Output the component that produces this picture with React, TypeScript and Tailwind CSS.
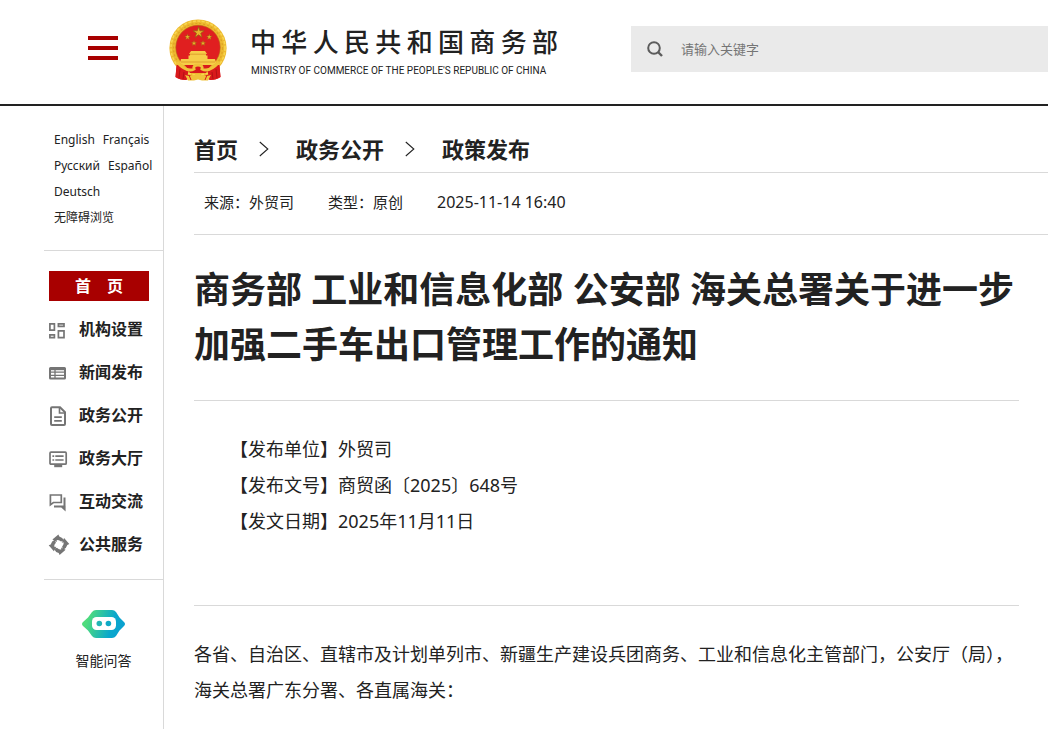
import React from 'react';

const SITE_NAME = '中华人民共和国商务部';

const languages = [
  ['English', 'Français'],
  ['Русский', 'Español'],
  ['Deutsch'],
  ['无障碍浏览'],
];

const Emblem: React.FC = () => {
  const star = '0,-1 0.225,-0.309 0.951,-0.309 0.364,0.118 0.588,0.809 0,0.382 -0.588,0.809 -0.364,0.118 -0.951,-0.309 -0.225,-0.309';

  return (
    <svg className="h-[62px] w-[58px] shrink-0" viewBox="0 0 58 62" role="img" aria-label="国徽">
      <path d="M8 43L6.500 58q4 3 10 3l3-1h19l3 1q6 0 10-3L50 43z" fill="#d9191c" />
      <circle cx="29" cy="29" r="28.6" fill="#edb92f" />
      <circle cx="29" cy="29" r="27" fill="none" stroke="#f8d650" strokeWidth="1.6" strokeDasharray="3 1.5" />
      <circle cx="29" cy="29" r="24.5" fill="none" stroke="#dda324" strokeWidth="1.2" strokeDasharray="2 2" />
      <circle cx="29" cy="28.5" r="22.2" fill="#e01f20" stroke="#b8601a" strokeWidth="0.6" />
      <g fill="#e8b52c" stroke="#8f6310" strokeWidth="0.12">
        <polygon points={star} transform="translate(29.6 13.6) scale(5.8)" />
        <polygon points={star} transform="translate(18.5 18) scale(3)" />
        <polygon points={star} transform="translate(40.3 18) scale(3)" />
        <polygon points={star} transform="translate(25 24.3) scale(2.8)" />
        <polygon points={star} transform="translate(34 24.3) scale(2.8)" />
      </g>
      <path d="M22 32h14l2 3H20zM21 35h16v1.5h1.5V40h-19v-3.5H21zM12 40h34l1 4-3 2H14l-3-2z" fill="#f6cd48" />
      <path d="M21 35.2h16M12 43h34" stroke="#d68d22" strokeWidth="0.7" />
      <path d="M7.500 46q7-1 12 6l-2 9q-7 0-11-3zM50.500 46q-7-1-12 6l2 9q7 0 11-3z" fill="#d9191c" />
      <path d="M11 50l-1 9M47 50l1 9M15 53l-1 7M43 53l1 7" stroke="#a80f12" strokeWidth="0.8" />
      <path d="M16 46h26l-5 8H21z" fill="#d9191c" />
      <path d="M8 43q10 11 17 7q-1-4 4-4t4 4q7 4 17-7" fill="none" stroke="#f0c23a" strokeWidth="3" />
      <path d="M16 56q6 2 9 0q4-2 8 0q3 2 9 0l-3 5.500h-6l-4-1-4 1h-6z" fill="#f0c23a" />
      <path d="M20 56l2 5M38 56l-2 5" stroke="#d9191c" strokeWidth="1" />
    </svg>
  );
};

const GridIcon: React.FC = () => (
  <svg className="size-5" viewBox="0 0 20 20" fill="none" stroke="#757575" strokeWidth="1.7">
    <path d="M.9 3.9h4.5v6.3H.9zM9.4 3.9H15v2.5H9.4zM.9 14.9h4.5v2.8H.9zM9.4 10.9H15v6.8H9.4z" />
  </svg>
);

const NewsIcon: React.FC = () => (
  <svg className="size-5" viewBox="0 0 20 20" fill="none" stroke="#757575">
    <rect x="1" y="4.9" width="15" height="10.6" rx="0.5" strokeWidth="2" />
    <path d="M1 6h15" strokeWidth="2.4" />
    <path d="M1 9.2h15M1 12.4h15M6 6v9" strokeWidth="1.3" />
  </svg>
);

const DocumentIcon: React.FC = () => (
  <svg className="size-5" viewBox="0 0 20 20" fill="none" stroke="#757575" strokeWidth="2">
    <path d="M2 2.2q0-1 1-1h8l5 5V18q0 1-1 1H3q-1 0-1-1z" />
    <path d="M10.5 1.5V7H16" strokeWidth="1.6" />
    <path d="M5.2 11.2h7.6M5.2 14.9h7.6" strokeWidth="1.7" />
  </svg>
);

const ScreenIcon: React.FC = () => (
  <svg className="size-5" viewBox="0 0 20 20" fill="none" stroke="#757575">
    <rect x="1" y="3.2" width="16.2" height="12" rx="1" strokeWidth="1.7" />
    <path d="M3.4 7.2h1.8M6.3 7.2h8.3M3.4 11h1.8M6.3 11h8.3" strokeWidth="1.7" />
    <path d="M5.2 17h8" strokeWidth="2.4" />
  </svg>
);

const ChatIcon: React.FC = () => (
  <svg className="size-5" viewBox="0 0 20 20" fill="none" stroke="#757575" strokeWidth="1.7">
    <path d="M1.4 3h10.9v7.5H4.4l-3 2.3z" />
    <path d="M15.5 5.4v9.1H5M15.6 13.8v3.4l-3-2.7" strokeWidth="2" />
  </svg>
);

const ServiceIcon: React.FC = () => {
  const blade = 'M3.4 4.6L9.4-.6l.9 2q3.4.8 4.700 4.200L12 6.600Q9.800 4.200 7.600 5.200L8 7z';

  return (
    <svg className="size-5 overflow-visible" viewBox="0 0 20 20" fill="#757575">
      <path d={blade} />
      <path d={blade} transform="rotate(90 10 9.7)" />
      <path d={blade} transform="rotate(180 10 9.7)" />
      <path d={blade} transform="rotate(270 10 9.7)" />
    </svg>
  );
};

const RobotIcon: React.FC = () => (
  <svg className="h-7 w-[43px]" viewBox="0 0 43 28">
    <defs>
      <linearGradient id="robot" x1="0" y1="0.4" x2="1" y2="0.6">
        <stop offset="0.1" stopColor="#4fdc7c" />
        <stop offset="0.7" stopColor="#0aa8cc" />
        <stop offset="1" stopColor="#0a9fd0" />
      </linearGradient>
    </defs>
    <path
      d="M14 0h16q2.5 0 4 2l3.5 5.5 4.5 4.5q2 2 0 4l-4.5 4.5L34 26q-1.5 2-4 2H14q-2.5 0-4-2l-4-5.5L1 16q-2-2 0-4l5-4.5L10 2q1.5-2 4-2z"
      fill="url(#robot)"
    />
    <rect x="10" y="7" width="24" height="13" rx="4.5" fill="#fff" />
    <circle cx="17.3" cy="13.5" r="2.8" fill="#21b5b5" />
    <circle cx="26.4" cy="13.5" r="2.8" fill="#0fa9c6" />
  </svg>
);

const Chevron: React.FC = () => (
  <svg className="mx-[21px] h-4 w-[10px]" viewBox="0 0 10 16" fill="none" stroke="#222" strokeWidth="1.1" aria-hidden="true">
    <path d="M.8 1l8 7-8 7" />
  </svg>
);

const menu = [
  { label: '机构设置', icon: <GridIcon /> },
  { label: '新闻发布', icon: <NewsIcon /> },
  { label: '政务公开', icon: <DocumentIcon /> },
  { label: '政务大厅', icon: <ScreenIcon /> },
  { label: '互动交流', icon: <ChatIcon /> },
  { label: '公共服务', icon: <ServiceIcon /> },
];

const Header: React.FC = () => (
  <header className="flex items-start border-b-2 border-[#222] pb-[23px] pl-[88px]">
    <button type="button" aria-label="菜单" className="mt-9 flex w-[30px] shrink-0 flex-col gap-[6px]">
      <span className="h-1 w-full bg-[#a80000]" />
      <span className="h-1 w-full bg-[#a80000]" />
      <span className="h-1 w-full bg-[#a80000]" />
    </button>
    <a href="#" className="mt-[19px] ml-[51px] flex shrink-0 gap-[23px]">
      <Emblem />
      <span className="flex w-[308px] flex-col pt-1">
        {/* one cell per character so the name spreads over the English line */}
        <span className="flex justify-between text-[26px] leading-[38px] font-medium">
          {Array.from(SITE_NAME).map((char, i) => (
            <span key={i}>{char}</span>
          ))}
        </span>
        <span className="pl-px font-[Roboto,'Liberation_Sans',sans-serif] text-[10px] leading-[19px] whitespace-nowrap">
          MINISTRY OF COMMERCE OF THE PEOPLE'S REPUBLIC OF CHINA
        </span>
      </span>
    </a>
    <form className="mt-[26px] ml-[73px] flex h-[46px] min-w-0 flex-1 items-center bg-[#eaeaea] pl-4">
      <button type="submit" aria-label="搜索">
        <svg className="size-4" viewBox="0 0 16 16" fill="none" stroke="#5c5c5c" strokeWidth="2">
          <circle cx="7" cy="7" r="5.8" />
          <path d="M11 11l4 4" strokeWidth="2.4" />
        </svg>
      </button>
      <input
        type="text"
        aria-label="请输入关键字"
        placeholder="请输入关键字"
        className="ml-[18px] h-full min-w-0 flex-1 bg-transparent text-[13px] outline-none placeholder:text-[#757575]"
      />
    </form>
  </header>
);

const Sidebar: React.FC = () => (
  <aside className="w-[164px] shrink-0 border-r border-[#d9d9d9] pl-11">
    <div className="border-b border-[#d9d9d9] pt-[21px] pb-[19px] pl-[10px] text-xs leading-[26px]">
      {languages.map((row) => (
        <div key={row[0]} className="flex gap-2 whitespace-nowrap">
          {row.map((name) => (
            <a key={name} href="#">{name}</a>
          ))}
        </div>
      ))}
    </div>
    <nav className="border-b border-[#d9d9d9] pt-5 pb-[13px] pl-[5px] text-base font-bold">
      <a href="#" className="mb-[7px] block w-[100px] bg-[#a80000] text-center leading-[30px] text-white">
        首　页
      </a>
      {menu.map((item) => (
        <a key={item.label} href="#" className="flex h-[43px] items-center gap-[10px] whitespace-nowrap">
          {item.icon}
          <span className="pb-0.5">{item.label}</span>
        </a>
      ))}
    </nav>
    <a href="#" className="flex flex-col items-center gap-3 pt-[30px] text-sm leading-[22px]">
      <RobotIcon />
      智能问答
    </a>
  </aside>
);

const Article: React.FC = () => (
  <main className="min-w-0 flex-1 pl-[30px]">
    <nav className="flex items-center border-b border-[#d9d9d9] pt-[26px] pb-[6px] text-[22px] leading-[34px] font-bold">
      <a href="#">首页</a>
      <Chevron />
      <a href="#" className="ml-[6px]">政务公开</a>
      <Chevron />
      <a href="#" className="ml-[6px]">政策发布</a>
    </nav>
    <div className="flex gap-[34px] border-b border-[#d9d9d9] pb-[2px] pl-[10px] text-[15px] leading-[59px]">
      <span>来源：外贸司</span>
      <span>类型：原创</span>
      <time className="text-base leading-[59px]">2025-11-14 16:40</time>
    </div>
    <article className="mr-[29px]">
      <h1 className="border-b border-[#d9d9d9] pt-[27px] pb-7 text-4xl leading-[55px] font-bold">
        商务部 工业和信息化部 公安部 海关总署关于进一步加强二手车出口管理工作的通知
      </h1>
      <div className="border-b border-[#d9d9d9] pt-[30px] pb-[66px] indent-9 text-lg leading-9">
        <p>【发布单位】外贸司</p>
        <p>【发布文号】商贸函〔2025〕648号</p>
        <p>【发文日期】2025年11月11日</p>
      </div>
      <p className="pt-[30px] text-lg leading-9">
        各省、自治区、直辖市及计划单列市、新疆生产建设兵团商务、工业和信息化主管部门，公安厅（局），海关总署广东分署、各直属海关：
      </p>
    </article>
  </main>
);

const App: React.FC = () => {
  return (
    <div lang="zh-CN" className="flex min-h-screen flex-col bg-white font-['Noto_Sans','Noto_Sans_CJK_SC',sans-serif] text-[#222]">
      <Header />
      <div className="flex flex-1">
        <Sidebar />
        <Article />
      </div>
    </div>
  );
};

export default App;
